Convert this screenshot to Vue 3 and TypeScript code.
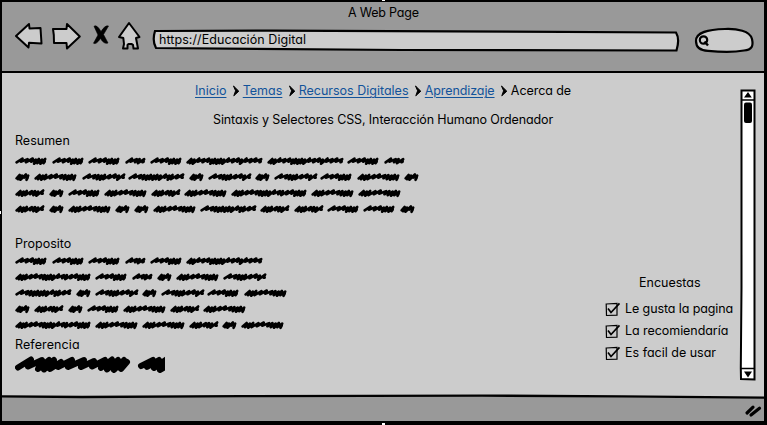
<script setup lang="ts">
type Word = [x: number, width: number]

interface Section {
  title: string
  kind: string
  rows: Word[][]
}

// Segment patterns of a scribbled word: l = loose stroke, d = dense stroke
const patterns: Record<number, string> = {
  14: 'ddld',
  20: 'lldl',
  29: 'dddlddl',
  31: 'llldddd',
  42: 'dddllldddd',
  43: 'lldddlldl',
  56: 'llddddddlddll',
  75: 'dddlllddddlldlldddd',
  76: 'ddllldddddllldllll',
}

const resumen: Word[][] = [
  [[15, 31], [52, 31], [88, 31], [125, 20], [150, 31], [186, 76], [267, 76], [347, 31], [384, 20]],
  [[15, 14], [34, 42], [82, 43], [128, 56], [189, 14], [208, 43], [255, 14], [274, 43], [320, 31], [357, 42], [404, 14]],
  [[15, 29], [49, 14], [68, 31], [104, 42], [151, 29], [184, 42], [231, 75], [311, 42], [358, 42]],
  [[15, 29], [49, 14], [68, 42], [115, 14], [134, 14], [153, 42], [200, 56], [260, 29], [294, 29], [327, 31], [363, 31], [400, 14]],
]

const proposito: Word[][] = [
  [[15, 31], [52, 31], [88, 31], [125, 20], [150, 31], [186, 76]],
  [[15, 75], [95, 31], [132, 20], [157, 14], [176, 42], [223, 43]],
  [[15, 56], [76, 14], [95, 43], [142, 14], [161, 43], [207, 31], [244, 42]],
  [[15, 14], [34, 29], [68, 14], [87, 31], [123, 42], [170, 29], [203, 42]],
  [[15, 75], [95, 42], [142, 42], [189, 29], [222, 14], [241, 42]],
]

const sections: Section[] = [
  { title: 'Resumen', kind: 'resumen', rows: resumen },
  { title: 'Proposito', kind: 'proposito', rows: proposito },
]

const crumbs = [
  { label: 'Inicio', kind: 'c1' },
  { label: 'Temas', kind: 'c2' },
  { label: 'Recursos Digitales', kind: 'c3' },
  { label: 'Aprendizaje', kind: 'c4' },
]

const polls = [
  { label: 'Le gusta la pagina', kind: 'p1' },
  { label: 'La recomiendaría', kind: 'p2' },
  { label: 'Es facil de usar', kind: 'p3' },
]

function scribble(width: number): string {
  const pattern = patterns[width]
  const total = [...pattern].reduce((sum, c) => sum + (c === 'l' ? 5.2 : 3.2), 0)
  const unit = (width - 3.2) / total
  let x = 1.6
  let path = `M${x} 9.4`
  ;[...pattern].forEach((c, i) => {
    const loose = c === 'l'
    const step = (loose ? 5.2 : 3.2) * unit
    const jitter = i % 2 ? 0.6 : 0
    const top = (loose ? 5.5 : 6) + jitter
    const bottom = (loose ? 8.7 : 10.2) + jitter
    path += `L${(x + step + 0.8).toFixed(1)} ${top}L${(x + step - 0.9).toFixed(1)} ${bottom}`
    x += step
  })
  return path + `L${(x + 0.3).toFixed(1)} 8.6`
}
</script>

<template>
  <div class="window">
    <header class="chrome">
      <div class="title"><span>A Web Page</span></div>
      <div class="toolbar">
        <svg class="nav" viewBox="0 0 130 34" width="130" height="34">
          <g fill="#ccc" stroke="#000" stroke-width="2" stroke-linejoin="round">
            <path d="M1 16 14 4 14.5 8.5 25.5 8 26.5 23.5 14 22.8 13.5 27.5Z" />
            <path d="M38 9 51.5 9 52 4 64.8 16.5 52 28.5 51.5 23 39 23 38.8 15Z" />
            <path d="M104 17 114 3 124.5 17 121 18 123 28.5 118.5 28.5 118 24.8 116.5 24 113.5 24 112.5 25 112.5 28.5 108 28.5 109 24 108.3 18Z" />
          </g>
          <path d="M79 6.2Q82 4.5 86 11.5Q90 5 93.5 6L88.5 14.5 93 23Q89 24.5 85.5 18.5Q81 25 78.5 23.2L83 15Z" fill="#000" stroke="#000" stroke-width=".6" stroke-linejoin="round" />
        </svg>
        <div class="address">
          <svg class="outline" viewBox="0 0 530 24" width="530" height="24">
            <path d="M3 3 120 2.6 524 4.5Q528 11 524.5 22.5L250 22 4 20Q0 13 3 3Z" fill="#ccc" stroke="#000" stroke-width="2.2" />
          </svg>
          <span class="url">https://Educación Digital</span>
        </div>
        <svg class="search" viewBox="0 0 62 28" width="62" height="28">
          <path d="M2 14C2 5 14 2.5 31 2C43 1.5 56 4 58 12C59.5 19 58 23 50 23.5Q36 26 14 23.8C5 23.5 2 20 2 14Z" fill="#ccc" stroke="#000" stroke-width="2.2" />
          <circle cx="9.5" cy="13" r="3.7" fill="none" stroke="#000" stroke-width="2.2" />
          <path d="M10.5 14.5 14 18.5" fill="none" stroke="#000" stroke-width="2.4" />
        </svg>
      </div>
    </header>

    <main class="page">
      <div class="content">
        <nav class="crumbs">
          <template v-for="c in crumbs" :key="c.label">
            <a :class="c.kind">{{ c.label }}</a>
            <svg class="chevron" width="6" height="12" viewBox="0 0 6 12">
              <path d="M.5 1 5.8 6.2 .8 10.8 2.6 5.8Z" fill="#000" stroke="#000" stroke-width="1" />
            </svg>
          </template>
          <span class="c5">Acerca de</span>
        </nav>
        <h1>Sintaxis y Selectores CSS, Interacción Humano Ordenador</h1>

        <section v-for="s in sections" :key="s.title" :class="s.kind">
          <h2>{{ s.title }}</h2>
          <div class="lines">
            <svg v-for="(row, i) in s.rows" :key="i" width="410" height="16" viewBox="15 0 410 16">
              <path v-for="w in row" :key="w[0]" :d="scribble(w[1])" :transform="`translate(${w[0]} 0)`" class="ink" />
            </svg>
          </div>
        </section>

        <section class="referencia">
          <h2>Referencia</h2>
          <svg width="150" height="18" viewBox="0 0 150 18">
            <path class="marker" d="M3 12.5 16 4.5 13 11.5 27 5 23 14 34 5 29 14.5 39 5 35 14 46 7 43 12 57 5 53 12 69 5 66 12 79 6 77 11.5 90 5 86 13 97 4.5 92 14.5 103 5 99 15 109 5 106 14 112 7" />
            <path class="marker" d="M126 11 138 5 132 12 144 5 139 13 152 4 145 15 153 10" />
          </svg>
        </section>
      </div>

      <aside class="polls">
        <h3>Encuestas</h3>
        <div v-for="p in polls" :key="p.label" class="poll">
          <svg width="16" height="15" viewBox="0 0 16 15">
            <path d="M1.2 2 12 1.5 12 13.2 1.5 13.5Z" fill="none" stroke="#000" stroke-width="1.2" />
            <path d="M3 6.5 6 10.5 14.5 1.3" fill="none" stroke="#000" stroke-width="1.7" />
          </svg>
          <span :class="p.kind">{{ p.label }}</span>
        </div>
      </aside>

      <svg class="scrollbar" width="18" height="294" viewBox="0 0 18 294">
        <path d="M2.5 2.5 15.5 2.5 15.5 291.5 2 291 1.8 280 2.5 200Z" fill="#fff" stroke="#000" stroke-width="2" />
        <path d="M2 12 16 12M2 280.5 16 280.5" stroke="#000" stroke-width="1.5" />
        <path d="M5 9.5 9 4 12.8 9.5ZM5 283.5 13 283.5 9 289.5Z" fill="#000" />
        <rect x="5" y="14.5" width="8" height="20.5" rx="2" fill="#000" />
      </svg>
    </main>

    <svg class="status" width="762" height="27" viewBox="0 0 762 27">
      <path d="M0 2.5 80 3 240 1.5 480 1.5 660 3.5 762 4V27H0Z" fill="#999" />
      <path d="M0 2.4 80 3 240 2.2 480 1.6 620 2.4 762 3.6" fill="none" stroke="#000" stroke-width="2.3" />
      <path d="M745 19 751 13.2M749 21 757.5 14.2" stroke="#000" stroke-width="3.2" stroke-linecap="round" />
    </svg>
    <i class="tick top"></i>
    <i class="tick bottom"></i>
    <i class="tick left"></i>
  </div>
</template>

<style>
body { margin: 0; background: #000; }
</style>

<style scoped>
* { box-sizing: border-box; }
svg { display: block; flex: none; }
.window {
  position: relative;
  width: 767px;
  height: 425px;
  padding: 2px 3px 4px 2px;
  overflow: hidden;
  background: #000;
  color: #000;
  display: flex;
  flex-direction: column;
  font: 12.5px/16px Inter, "Liberation Sans", sans-serif;
  font-feature-settings: "cv11";
  white-space: nowrap;
}
.chrome { height: 71px; flex: none; background: #999; border-bottom: 2px solid #000; }
.title { height: 18px; padding: 3px 0 0 346px; }
.title span { letter-spacing: -0.2px; }
.toolbar { display: flex; align-items: flex-start; padding-left: 13px; }
.nav { margin-right: 7px; }
.address { position: relative; width: 530px; height: 24px; margin-top: 8px; margin-right: 12px; padding: 4px 7px; }
.outline { position: absolute; inset: 0; }
.url { position: relative; letter-spacing: 0.07px; }
.search { margin-top: 7px; }
.page { height: 321px; flex: none; display: flex; background: #ccc; }
.content { width: 603px; padding: 10px 0 0 13px; flex: none; }
.crumbs { display: flex; align-items: center; height: 16px; padding-left: 180px; }
.crumbs a { color: #12539a; text-decoration: underline; text-underline-offset: 2px; text-decoration-thickness: 1px; }
.crumbs .c4 { letter-spacing: -0.1px; }
.c5 { letter-spacing: -0.06px; }
.chevron { margin: 0 4px 0 6.3px; }
h1, h2, h3 { margin: 0; font-size: inherit; font-weight: 400; }
h1 { margin: 13px 0 0 198px; line-height: 16px; letter-spacing: -0.115px; }
h2 { line-height: 16px; }
section { margin-top: 5px; }
.lines { padding-top: 4px; }
.proposito { margin-top: 19px; }
.proposito .lines { padding-top: 1px; }
.referencia { margin-top: 4px; }
.referencia h2 { letter-spacing: 0.1px; }
.referencia svg { margin-top: 2px; }
.ink { fill: none; stroke: #000; stroke-width: 2.6; stroke-linecap: round; stroke-linejoin: round; }
.marker { fill: none; stroke: #000; stroke-width: 6; stroke-linecap: round; stroke-linejoin: round; }
.polls { width: 134px; padding-top: 202px; flex: none; }
.polls h3 { padding-left: 34px; margin-bottom: 10px; }
.poll { display: flex; align-items: center; height: 16px; margin-bottom: 6px; gap: 4px; }
.p1 { letter-spacing: -0.1px; }
.p2 { letter-spacing: -0.06px; }
.scrollbar { margin-top: 15px; }
.status { width: 762px; background: #ccc; }
.tick { position: absolute; background: #fff; }
.top { left: 382px; top: 0; width: 3px; height: 1px; }
.bottom { left: 382px; top: 423px; width: 3px; height: 2px; }
.left { left: 0; top: 211px; width: 1px; height: 3px; }
</style>
